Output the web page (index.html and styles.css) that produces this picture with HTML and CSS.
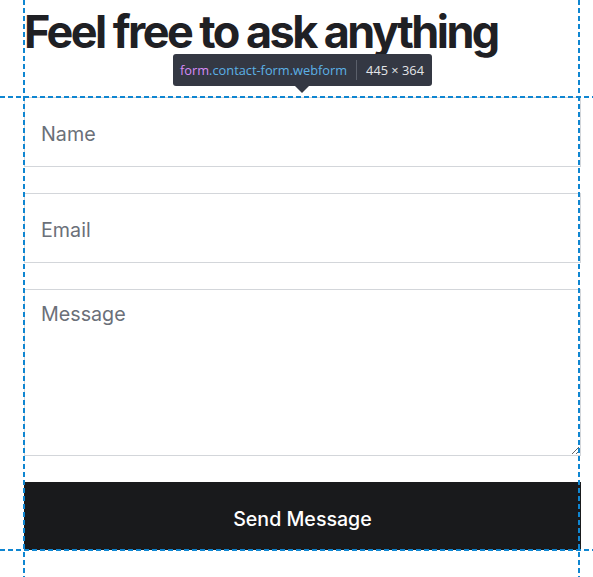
FILE: index.html
```html
<!DOCTYPE html>
<html lang="en">
<head>
<meta charset="utf-8">
<title>Contact</title>
<link rel="stylesheet" href="styles.css">
</head>
<body>
<main class="page">
  <h1 class="title">Feel free to ask anything</h1>
  <form class="contact-form webform">
    <input class="field" type="text" placeholder="Name">
    <input class="field" type="email" placeholder="Email">
    <textarea class="field field-area" placeholder="Message"></textarea>
    <button class="send" type="button">Send Message</button>
  </form>
</main>
<div class="guide guide-v guide-left"></div>
<div class="guide guide-v guide-right"></div>
<div class="guide guide-h guide-top"></div>
<div class="guide guide-h guide-bottom"></div>
<div class="tip">
  <span class="tip-tag">form</span><span class="tip-cls">.contact-form.webform</span><span class="tip-sep"></span><span class="tip-dim">445 × 364</span>
  <span class="tip-arrow"></span>
</div>
</body>
</html>
```
FILE: styles.css
```css
html, body {
  margin: 0;
  padding: 0;
  background: #ffffff;
}
body {
  width: 593px;
  height: 577px;
  overflow: hidden;
  position: relative;
  font-family: Inter, "Liberation Sans", sans-serif;
}
.page {
  padding: 7px 0 0 24px;
  width: 557px;
}
.title {
  margin: 0 0 41px 0;
  font-size: 45px;
  line-height: 49px;
  font-weight: 700;
  letter-spacing: -0.057em;
  color: #1f2024;
  white-space: nowrap;
}
.contact-form {
  display: flex;
  flex-direction: column;
  gap: 26px;
}
.field {
  box-sizing: border-box;
  width: 100%;
  height: 70px;
  margin: 0;
  padding: 4px 16px 0 16px;
  border: 1px solid #d3d6da;
  border-radius: 0;
  background: #ffffff;
  font-family: Inter, "Liberation Sans", sans-serif;
  font-size: 19.7px;
  color: #1f2024;
  outline: none;
}
.field::placeholder {
  color: #6b7079;
  opacity: 1;
}
.field-area {
  height: 167px;
  padding: 10px 16px;
  line-height: 28px;
  resize: both;
  display: block;
}
.send {
  height: 68px;
  margin: 0;
  border: 0;
  border-radius: 0;
  background: #191a1c;
  color: #ffffff;
  font-family: Inter, "Liberation Sans", sans-serif;
  font-size: 19.6px;
  font-weight: 500;
  padding: 5px 0 0 0;
}
.guide {
  position: absolute;
  pointer-events: none;
}
.guide-v {
  top: 0;
  width: 2px;
  height: 577px;
  background: repeating-linear-gradient(to bottom, #0f86d1 0 5px, transparent 5px 8px);
}
.guide-h {
  left: 0;
  height: 2px;
  width: 593px;
  background: repeating-linear-gradient(to right, #0f86d1 0 5px, transparent 5px 8px);
}
.guide-left { left: 23px; }
.guide-right { left: 578px; }
.guide-top { top: 96px; }
.guide-bottom { top: 549px; }
.tip {
  position: absolute;
  left: 173px;
  top: 54px;
  height: 32px;
  box-sizing: border-box;
  padding: 0 8px 0 7px;
  display: flex;
  align-items: center;
  background: #343843;
  border-radius: 3px;
  font-family: "Open Sans", "Noto Sans", sans-serif;
  font-size: 12.8px;
  white-space: nowrap;
}
.tip-tag { color: #d78bf7; }
.tip-cls { color: #5cb1e6; }
.tip-sep {
  width: 1px;
  height: 20px;
  background: #5b606b;
  margin: 0 9px;
}
.tip-dim { color: #e3e5e8; }
.tip-arrow {
  position: absolute;
  left: 122px;
  top: 32px;
  width: 0;
  height: 0;
  border-left: 7px solid transparent;
  border-right: 7px solid transparent;
  border-top: 7px solid #343843;
}
```
